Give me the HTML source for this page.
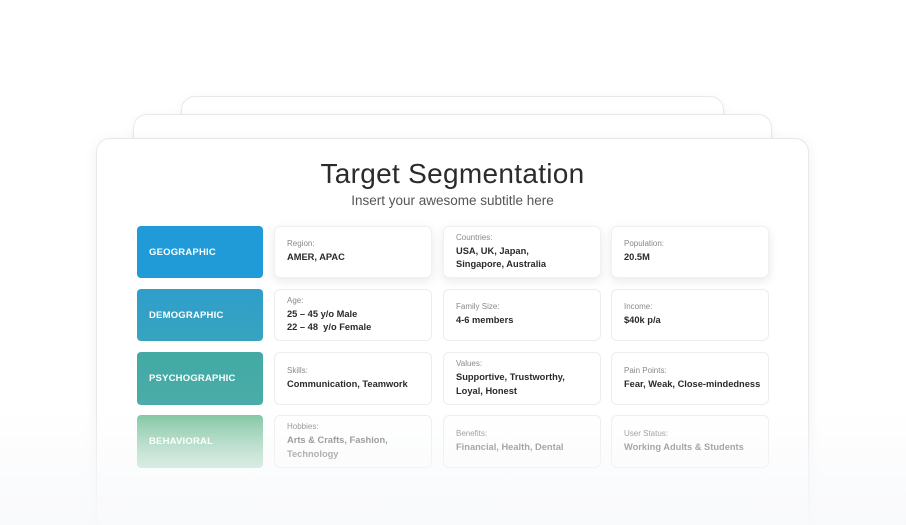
<!DOCTYPE html>
<html><head><meta charset="utf-8"><style>
*{margin:0;padding:0;box-sizing:border-box}
html,body{width:906px;height:525px;overflow:hidden}
body{background:#fff;font-family:"Liberation Sans",sans-serif;position:relative}
.card{position:absolute;background:#fff;border:1px solid #e6e8ec;border-radius:14px;box-shadow:0 2px 10px rgba(0,0,0,0.05)}
.lab{position:absolute;left:137px;width:126px;border-radius:4px;color:#fff;font-size:9.5px;font-weight:bold;letter-spacing:0.2px;padding-left:12px;display:flex;align-items:center}
.c{position:absolute;width:158px;background:#fff;border:1px solid #ebedf0;border-radius:6px;padding-left:12px;display:flex;flex-direction:column;justify-content:center}
.sh{border-color:#f0f0f0;box-shadow:0 3px 10px rgba(0,0,0,0.09)}
.k{font-size:8px;color:#888;margin-bottom:3px}
.v{font-size:9.3px;color:#2a2a2a;line-height:13.5px;font-weight:bold}
.fade{position:absolute;left:0;top:410px;width:906px;height:115px;background:linear-gradient(rgba(248,249,251,0),rgba(248,249,251,0.45) 40%,rgba(248,249,251,0.95))}
</style></head><body>
<div class="card" style="left:181px;top:96px;width:543px;height:300px"></div>
<div class="card" style="left:133px;top:114px;width:639px;height:300px"></div>
<div class="card" style="left:96px;top:138px;width:713px;height:400px;box-shadow:0 2px 14px rgba(0,0,0,0.06)"></div>
<div style="position:absolute;left:96px;width:713px;top:158px;text-align:center;font-size:28px;color:#2b2b2b;letter-spacing:0.3px">Target Segmentation</div>
<div style="position:absolute;left:96px;width:713px;top:193px;text-align:center;font-size:13.5px;color:#555">Insert your awesome subtitle here</div>

<div class="lab" style="top:226px;height:52px;background:#219bd8">GEOGRAPHIC</div>
<div class="lab" style="top:289px;height:52px;background:linear-gradient(#2f9ecb,#37a4bf)">DEMOGRAPHIC</div>
<div class="lab" style="top:352px;height:53px;background:linear-gradient(#42a9a3,#4aaca8)">PSYCHOGRAPHIC</div>
<div class="lab" style="top:415px;height:53px;background:linear-gradient(#7fc5a0,#b3dcc8)">BEHAVIORAL</div>

<div class="c sh" style="left:274px;top:226px;height:52px"><div class="k">Region:</div><div class="v">AMER, APAC</div></div>
<div class="c sh" style="left:443px;top:226px;height:52px"><div class="k">Countries:</div><div class="v">USA, UK, Japan,<br>Singapore, Australia</div></div>
<div class="c sh" style="left:611px;top:226px;height:52px"><div class="k">Population:</div><div class="v">20.5M</div></div>

<div class="c" style="left:274px;top:289px;height:52px"><div class="k">Age:</div><div class="v">25 – 45 y/o Male<br>22 – 48&nbsp; y/o Female</div></div>
<div class="c" style="left:443px;top:289px;height:52px"><div class="k">Family Size:</div><div class="v">4-6 members</div></div>
<div class="c" style="left:611px;top:289px;height:52px"><div class="k">Income:</div><div class="v">$40k p/a</div></div>

<div class="c" style="left:274px;top:352px;height:53px"><div class="k">Skills:</div><div class="v">Communication, Teamwork</div></div>
<div class="c" style="left:443px;top:352px;height:53px"><div class="k">Values:</div><div class="v">Supportive, Trustworthy,<br>Loyal, Honest</div></div>
<div class="c" style="left:611px;top:352px;height:53px"><div class="k">Pain Points:</div><div class="v">Fear, Weak, Close-mindedness</div></div>

<div class="c" style="left:274px;top:415px;height:53px"><div class="k">Hobbies:</div><div class="v" style="color:#777">Arts &amp; Crafts, Fashion,<br>Technology</div></div>
<div class="c" style="left:443px;top:415px;height:53px"><div class="k">Benefits:</div><div class="v" style="color:#777">Financial, Health, Dental</div></div>
<div class="c" style="left:611px;top:415px;height:53px"><div class="k">User Status:</div><div class="v" style="color:#777">Working Adults &amp; Students</div></div>

<div class="fade"></div>
</body></html>
